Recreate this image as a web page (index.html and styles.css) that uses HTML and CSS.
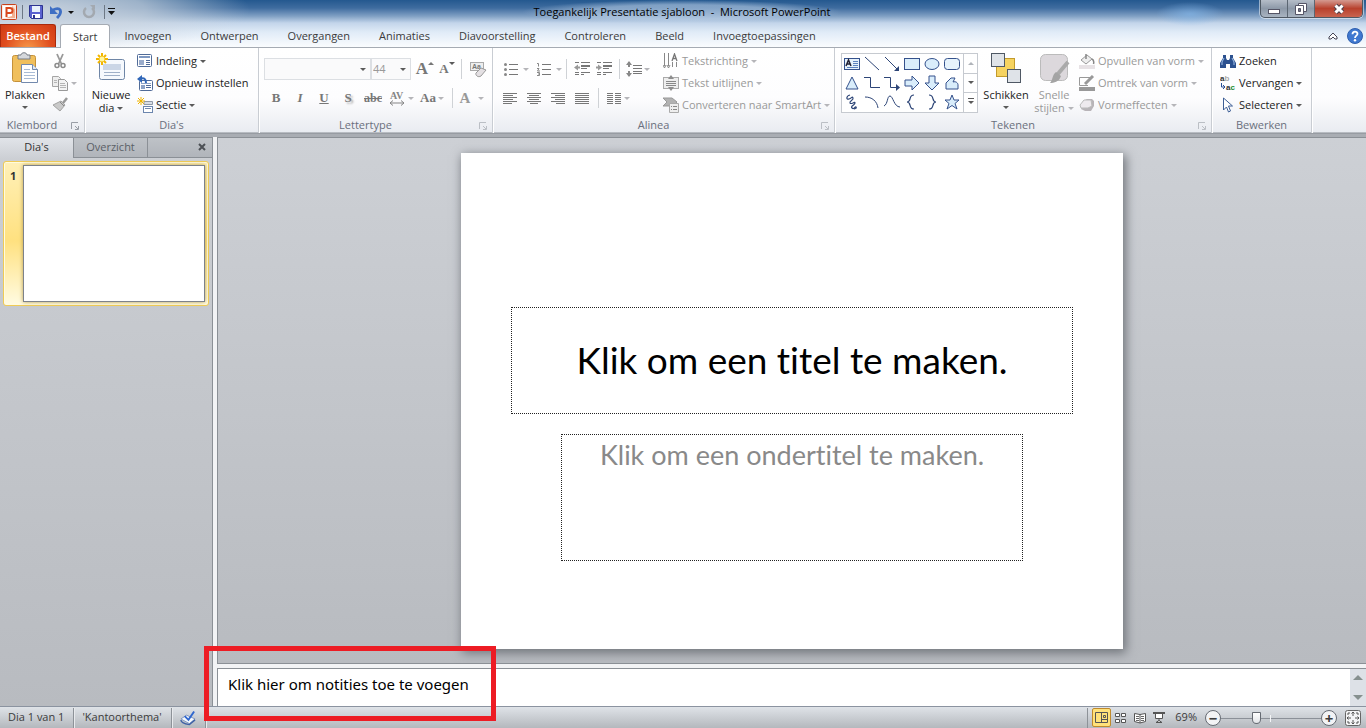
FILE: index.html
```
<!DOCTYPE html>
<html lang="nl">
<head>
  <meta charset="UTF-8" />
  <meta name="viewport" content="width=device-width, initial-scale=1.0"/>
  <title>Toegankelijk Presentatie sjabloon - Microsoft PowerPoint</title>
  <link rel="stylesheet" href="styles.css">
</head>
<body>
  <header class="header">
    <div class="titlebar">
      <div class="quick">
        <svg class="app-logo" width="16" height="16" viewBox="0 0 16 16"><rect x=".5" y=".5" width="15" height="15" rx="1" fill="#fbe9e2" stroke="#c8421c"/><path d="M2 2h9l3 3v9H2z" fill="#fff"/><path d="M11 2l3 3v9H4l7-2z" fill="#f3b08f"/><path d="M5.500 13V4H9a2.500 2.500 0 0 1 0 5H5.500" fill="none" stroke="#d9481d" stroke-width="2"/></svg>
        <span class="quick-line"></span>
        <button class="quick-btn" aria-label="Opslaan"><svg width="16" height="16" viewBox="0 0 16 16"><path d="M1.500 1.500h13v13h-11l-2-2z" fill="#5a62d0" stroke="#2c3490"/><path d="M4 2h8v6H4z" fill="#e8f1fb"/><path d="M4 10h8v4H4z" fill="#fff"/><path d="M5 11h2v3H5z" fill="#2c3490"/></svg></button>
        <button class="quick-btn" aria-label="Ongedaan maken"><svg width="14" height="14" viewBox="0 0 14 14"><path d="M4 5c5-3 9-1 7 4-.6 1.600-1.600 2.500-3 4" fill="none" stroke="#3f6fc4" stroke-width="2.800"/><path d="M1 1v8h8z" fill="#3f6fc4"/></svg></button>
        <i class="caret black"></i>
        <button class="quick-btn redo" aria-label="Opnieuw"><svg width="14" height="14" viewBox="0 0 14 14"><path d="M4 3a5 5 0 1 0 6 0" fill="none" stroke="#a3a9b0" stroke-width="2.500"/><path d="M8 0h5v5z" fill="#a3a9b0"/></svg></button>
        <span class="quick-line"></span>
        <button class="quick-btn more" aria-label="Werkbalk aanpassen"><svg width="7" height="8" viewBox="0 0 7 8"><path d="M0 0h7v1H0zM0 3h7L3.500 7z" fill="#111"/></svg></button>
      </div>
      <div class="window-title">Toegankelijk Presentatie sjabloon &nbsp;-&nbsp; Microsoft PowerPoint</div>
      <div class="window-controls">
        <div class="controls-box">
          <button aria-label="Minimaliseren"><svg width="14" height="14" viewBox="0 0 14 14"><rect x="1.500" y="7.500" width="11" height="4" fill="#fff" stroke="#556"/></svg></button>
          <button aria-label="Verkleinen"><svg width="14" height="14" viewBox="0 0 14 14"><path d="M4.500 1.500h8v8h-8z" fill="#fff" stroke="#556"/><path d="M1.500 3.500h8v9h-8z" fill="#fff" stroke="#556"/><path d="M4.500 6.500h2v3h-2z" fill="#778" stroke="#556"/></svg></button>
          <button class="close" aria-label="Sluiten"><svg width="14" height="14" viewBox="0 0 14 14"><path d="M3.500 3.500l7 7M10.500 3.500l-7 7" stroke="#50404a" stroke-width="5"/><path d="M3.500 3.500l7 7M10.500 3.500l-7 7" stroke="#fff" stroke-width="3"/></svg></button>
        </div>
      </div>
    </div>
    <nav class="tabs">
      <button class="file-tab">Bestand</button>
      <button class="tab active">Start</button>
      <button class="tab">Invoegen</button>
      <button class="tab">Ontwerpen</button>
      <button class="tab">Overgangen</button>
      <button class="tab">Animaties</button>
      <button class="tab">Diavoorstelling</button>
      <button class="tab">Controleren</button>
      <button class="tab">Beeld</button>
      <button class="tab">Invoegtoepassingen</button>
      <div class="tabs-right">
        <button aria-label="Lint minimaliseren"><svg width="10" height="8" viewBox="0 0 10 8"><path d="M1 5l4-4 4 4v2H7L5 5 3 7H1z" fill="#fff" stroke="#445"/></svg></button>
        <button aria-label="Help"><svg width="16" height="16" viewBox="0 0 16 16"><circle cx="8" cy="8" r="7.500" fill="#3f78d0" stroke="#2f5fae"/><path d="M5.500 6.200C5.500 2.800 10.600 2.900 10.500 6 10.400 7.600 8 7.800 8 10" fill="none" stroke="#fff" stroke-width="1.800"/><circle cx="8" cy="12.300" r="1.200" fill="#fff"/></svg></button>
      </div>
    </nav>
  </header>

  <section class="ribbon">
    <!-- Klembord -->
    <div class="group clipboard">
      <div class="group-body">
        <button class="big">
          <svg width="30" height="32" viewBox="0 0 30 32"><rect x="2.500" y="3.500" width="23" height="26" rx="2" fill="#f0bf5c" stroke="#c5913a"/><path d="M8 7V3h3c0-3 6-3 6 0h3v4z" fill="#d5d8dc" stroke="#777d85"/><path d="M11.500 12.500h11l5 5v13h-16z" fill="#fff" stroke="#7289ad"/><path d="M22.500 12.500v5h5" fill="#dfe8f4" stroke="#7289ad"/><path d="M14 17.500h6M14 20.500h11M14 23.500h11M14 26.500h11" stroke="#a9bcd6"/></svg>
          <span>Plakken</span>
          <i class="caret"></i>
        </button>
        <div class="rows">
          <button class="small" aria-label="Knippen"><svg width="16" height="16" viewBox="0 0 16 16"><path d="M5 1l4.500 10M11 1L6.500 11" stroke="#999" stroke-width="1.800"/><circle cx="5" cy="12.500" r="2" fill="none" stroke="#8b8b8b" stroke-width="1.500"/><circle cx="11" cy="12.500" r="2" fill="none" stroke="#8b8b8b" stroke-width="1.500"/></svg></button>
          <button class="small" aria-label="Kopiëren"><svg width="16" height="16" viewBox="0 0 16 16"><path d="M.5 1.500h6l2 2v8h-8z" fill="#eee" stroke="#a5a5a5"/><path d="M6.500 4.500h6l3 3v8h-9z" fill="#f4f4f4" stroke="#999"/><path d="M2 5.500h3M2 7.500h3M8 8.500h5M8 10.500h6M8 12.500h6" stroke="#b5b5b5"/></svg><i class="caret dim"></i></button>
          <button class="small" aria-label="Opmaak kopiëren"><svg width="16" height="16" viewBox="0 0 16 16"><path d="M15 1l-4 5" stroke="#999" stroke-width="2.500"/><path d="M9 4l4 4-5 6-7-6z" fill="#c9c9c9" stroke="#a2a2a2"/><path d="M8 5l4 4" stroke="#888"/></svg></button>
        </div>
      </div>
      <div class="group-label">Klembord<svg class="launch" width="8" height="8" viewBox="0 0 8 8"><path d="M.5 7V.5H7M4 4l3 3M7.500 4v3.500H4" fill="none" stroke="#999ea6"/></svg></div>
    </div>

    <!-- Dia's -->
    <div class="group slides">
      <div class="group-body">
        <button class="big">
          <svg width="32" height="32" viewBox="0 0 32 32"><rect x="4.500" y="7.500" width="25" height="20" rx="2" fill="#f6f9fd" stroke="#6f86a6"/><path d="M8 12h18v6H8z" fill="#cbd6e6"/><path d="M9 20.500h16M9 23.500h16" stroke="#9fb0c8"/><path d="M7 1v12M1 7h12M3 3l8 8M11 3l-8 8" stroke="#f2b600" stroke-width="2"/><circle cx="7" cy="7" r="2.500" fill="#fff6a0"/></svg>
          <span>Nieuwe<br>dia <i class="caret"></i></span>
        </button>
        <div class="rows">
          <button class="small"><svg width="16" height="16" viewBox="0 0 16 16"><rect x=".5" y="1.500" width="14" height="12" rx="1" fill="#fff" stroke="#506b98"/><path d="M2 3h11v2H2z" fill="#7f99c2"/><path d="M2 7h5v5H2z" fill="#9aaccb"/><path d="M9 7.500h4M9 9.500h4M9 11.500h4" stroke="#506b98"/></svg>Indeling<i class="caret"></i></button>
          <button class="small"><svg width="16" height="16" viewBox="0 0 16 16"><rect x="2.500" y="5.500" width="13" height="10" rx="1" fill="#fff" stroke="#506b98"/><path d="M4 8h10v1H4zM4 10h4v4H4z" fill="#8da3c7"/><path d="M9 10.500h5M9 12.500h5" stroke="#506b98"/><path d="M3 4c4-2 6 0 6 4" fill="none" stroke="#2f66b8" stroke-width="2"/><path d="M0 4l5-4v8z" fill="#2f66b8"/></svg>Opnieuw instellen</button>
          <button class="small"><svg width="16" height="16" viewBox="0 0 16 16"><path d="M7 4.500h8.500v3H7z" fill="#d8dde5" stroke="#8f98a6"/><rect x="6.500" y="9.500" width="9" height="6" fill="#fff" stroke="#6c86ae"/><path d="M8 11.500h6" stroke="#7288ad"/><path d="M4 0v8M0 4h8M1 1l6 6M7 1L1 7" stroke="#f0b400"/></svg>Sectie<i class="caret"></i></button>
        </div>
      </div>
      <div class="group-label">Dia's</div>
    </div>

    <!-- Lettertype -->
    <div class="group font">
      <div class="group-body tools">
        <div class="tool-row">
          <div class="select-wrap name"><select aria-label="Lettertype"><option></option></select><i class="caret"></i></div>
          <div class="select-wrap size"><select aria-label="Tekengrootte"><option>44</option></select><i class="caret"></i></div>
          <button class="tool serif grow" aria-label="Groter">A<i class="caret up"></i></button>
          <button class="tool serif shrink" aria-label="Kleiner">A<i class="caret"></i></button>
          <span class="line"></span>
          <button class="tool clear" aria-label="Opmaak wissen"><svg width="17" height="17" viewBox="0 0 17 17"><rect x=".5" y="1.500" width="13" height="8" fill="#eee" stroke="#aaa"/><text class="icon-text" x="2" y="8">Aa</text><path d="M6 12l5-5 5 2-5 6c-3 2-6-1-5-3z" fill="#e4e0e3" stroke="#999"/></svg></button>
        </div>
        <div class="tool-row">
          <button class="tool serif">B</button>
          <button class="tool serif italic">I</button>
          <button class="tool serif underline">U</button>
          <button class="tool serif shadow">S</button>
          <button class="tool serif strike">abc</button>
          <button class="tool wide" aria-label="Tekenafstand"><svg width="17" height="15" viewBox="0 0 17 15"><text x="1" y="8" font-family="Liberation Serif" font-size="10" font-weight="700" fill="#858585">AV</text><path d="M1 12h14M4 9.500L1 12l3 2.500M12 9.500l3 2.500-3 2.500" fill="none" stroke="#858585"/></svg><i class="caret dim"></i></button>
          <button class="tool serif wide case">Aa<i class="caret dim"></i></button>
          <span class="line"></span>
          <button class="tool serif wide color">A<i class="caret dim"></i></button>
        </div>
      </div>
      <div class="group-label">Lettertype<svg class="launch" width="8" height="8" viewBox="0 0 8 8"><path d="M.5 7V.5H7M4 4l3 3M7.500 4v3.500H4" fill="none" stroke="#bbbfc5"/></svg></div>
    </div>

    <!-- Alinea -->
    <div class="group paragraph">
      <div class="group-body">
        <div class="tools">
          <div class="tool-row">
            <button class="tool list" aria-label="Opsommingstekens"><svg width="14" height="14" viewBox="0 0 14 14"><path d="M5 2.500h9M5 7.500h9M5 12.500h9" stroke="#777"/><circle cx="1.500" cy="2.500" r="1.500" fill="#888"/><circle cx="1.500" cy="7.500" r="1.500" fill="#888"/><circle cx="1.500" cy="12.500" r="1.500" fill="#888"/></svg><i class="caret dim"></i></button>
            <button class="tool list" aria-label="Nummering"><svg width="14" height="14" viewBox="0 0 14 14"><path d="M5 2.500h9M5 7.500h9M5 12.500h9" stroke="#777"/><path d="M0 1.500h1.500v3M0 6.500h2L.5 9H3M0 10.500h2.500v3H0M1 12h1" fill="none" stroke="#888"/></svg><i class="caret dim"></i></button>
            <span class="line"></span>
            <button class="tool mid" aria-label="Inspringing verkleinen"><svg width="16" height="14" viewBox="0 0 16 14"><path d="M1 .5h4M7 .5h9M7 3.500h9M7 4.500h9M7 6.500h6M1 10.500h4M7 10.500h9M1 12.500h4M7 12.500h3" stroke="#777"/><path d="M0 5.500l4-3v2h2v2H4v2z" fill="#999"/></svg></button>
            <button class="tool mid" aria-label="Inspringing vergroten"><svg width="16" height="14" viewBox="0 0 16 14"><path d="M1 .5h4M7 .5h9M7 3.500h9M7 4.500h9M7 6.500h6M1 10.500h4M7 10.500h9M1 12.500h4M7 12.500h3" stroke="#777"/><path d="M6 5.500l-4-3v2H0v2h2v2z" fill="#999"/></svg></button>
            <span class="line"></span>
            <button class="tool spacing" aria-label="Regelafstand"><svg width="16" height="16" viewBox="0 0 16 16"><path d="M7 4.500h9M7 7.500h9M7 10.500h9M7 12.500h9" stroke="#777"/><path d="M3 1v5M3 10v5" stroke="#888" stroke-width="2"/><path d="M0 4l3-4 3 4zM0 12l3 4 3-4z" fill="#888"/></svg><i class="caret dim"></i></button>
          </div>
          <div class="tool-row align">
            <button class="tool" aria-label="Links uitlijnen"><svg width="14" height="11" viewBox="0 0 14 11"><path d="M0 .5h14M0 2.500h10M0 4.500h14M0 6.500h10M0 8.500h14M0 10.500h9" stroke="#777"/></svg></button>
            <button class="tool" aria-label="Centreren"><svg width="14" height="11" viewBox="0 0 14 11"><path d="M0 .5h14M2 2.500h10M0 4.500h14M2 6.500h10M0 8.500h14M3 10.500h8" stroke="#777"/></svg></button>
            <button class="tool" aria-label="Rechts uitlijnen"><svg width="14" height="11" viewBox="0 0 14 11"><path d="M0 .5h14M4 2.500h10M0 4.500h14M4 6.500h10M0 8.500h14M5 10.500h9" stroke="#777"/></svg></button>
            <button class="tool" aria-label="Uitvullen"><svg width="14" height="11" viewBox="0 0 14 11"><path d="M0 .5h14M0 2.500h14M0 4.500h14M0 6.500h14M0 8.500h14M0 10.500h14" stroke="#777"/></svg></button>
            <span class="line"></span>
            <button class="tool columns" aria-label="Kolommen"><svg width="14" height="11" viewBox="0 0 14 11"><path d="M0 .5h6M8 .5h6M0 2.500h6M8 2.500h6M0 4.500h6M8 4.500h6M0 6.500h6M8 6.500h6M0 8.500h6M8 8.500h6M0 10.500h6M8 10.500h6" stroke="#777"/></svg><i class="caret dim"></i></button>
          </div>
        </div>
        <div class="rows off">
          <button class="small"><svg width="16" height="16" viewBox="0 0 16 16"><path d="M1.500 0v13M5.500 0v13M9.500 9v5M13.500 9v5M0 12l1.500 3L3 12M4 12l1.500 3L7 12" fill="none" stroke="#888"/><path d="M9 8l2.500-7L14 8M10 5.500h3" fill="none" stroke="#777" stroke-width="1.300"/></svg>Tekstrichting<i class="caret dim"></i></button>
          <button class="small"><svg width="16" height="16" viewBox="0 0 16 16"><rect x=".5" y="2.500" width="15" height="11" fill="#eee" stroke="#aaa"/><path d="M3 6.500h10M3 8.500h10M3 10.500h10" stroke="#888"/><path d="M5 4l3-4 3 4zM5 12l3 4 3-4z" fill="#8d8d8d"/></svg>Tekst uitlijnen<i class="caret dim"></i></button>
          <button class="small"><svg width="16" height="16" viewBox="0 0 16 16"><path d="M0 1h9l5 4-4 4H0l4-4z" fill="#b2b2b2" stroke="#999"/><path d="M6.500 6.500h9v9h-9z" fill="#eee" stroke="#aaa"/><path d="M8 9.500h1M10 9.500h4M8 12.500h1M10 12.500h4" stroke="#888"/></svg>Converteren naar SmartArt<i class="caret dim"></i></button>
        </div>
      </div>
      <div class="group-label">Alinea<svg class="launch" width="8" height="8" viewBox="0 0 8 8"><path d="M.5 7V.5H7M4 4l3 3M7.500 4v3.500H4" fill="none" stroke="#bbbfc5"/></svg></div>
    </div>

    <!-- Tekenen -->
    <div class="group drawing">
      <div class="group-body">
        <div class="gallery">
          <div class="shapes">
            <button aria-label="Tekstvak"><svg width="16" height="16" viewBox="0 0 16 16"><rect x=".5" y="2.500" width="15" height="11" fill="#e6f2fc" stroke="#34518c"/><path d="M2 10l2.500-6L7 10M3 8h3" fill="none" stroke="#223" stroke-width="1.500"/><path d="M9 5.500h5M9 7.500h5M9 9.500h5M3 11.500h11" stroke="#5c83bf"/></svg></button>
            <button aria-label="Lijn"><svg width="16" height="16" viewBox="0 0 16 16"><path d="M1 1l14 13" stroke="#2d4577"/></svg></button>
            <button aria-label="Pijl"><svg width="16" height="16" viewBox="0 0 16 16"><path d="M1 1l12 12" stroke="#2d4577"/><path d="M15 15v-5l-5 5z" fill="#2d4577"/></svg></button>
            <button aria-label="Rechthoek"><svg width="16" height="16" viewBox="0 0 16 16"><rect x=".5" y="2.500" width="15" height="11" fill="#d9edfb" stroke="#34518c"/></svg></button>
            <button aria-label="Ovaal"><svg width="16" height="16" viewBox="0 0 16 16"><ellipse cx="8" cy="8" rx="7" ry="5.500" fill="#d9edfb" stroke="#34518c"/></svg></button>
            <button aria-label="Afgeronde rechthoek"><svg width="16" height="16" viewBox="0 0 16 16"><rect x=".5" y="2.500" width="15" height="11" rx="3" fill="#e6f3fc" stroke="#34518c"/></svg></button>
            <button aria-label="Driehoek"><svg width="16" height="16" viewBox="0 0 16 16"><path d="M8 2l6 12H2z" fill="#d9edfb" stroke="#34518c"/></svg></button>
            <button aria-label="Verbindingslijn"><svg width="16" height="16" viewBox="0 0 16 16"><path d="M0 2.500h6.500v10H16" fill="none" stroke="#2d4577"/></svg></button>
            <button aria-label="Verbindingspijl"><svg width="16" height="16" viewBox="0 0 16 16"><path d="M0 2.500h6.500v10H14" fill="none" stroke="#2d4577"/><path d="M12 9l4 3.500-4 3.500z" fill="#2d4577"/></svg></button>
            <button aria-label="Pijl rechts"><svg width="16" height="16" viewBox="0 0 16 16"><path d="M1 5h7V1l7 7-7 7v-4H1z" fill="#d9edfb" stroke="#34518c"/></svg></button>
            <button aria-label="Pijl omlaag"><svg width="16" height="16" viewBox="0 0 16 16"><path d="M5 1v7H1l7 7 7-7h-4V1z" fill="#d9edfb" stroke="#34518c"/></svg></button>
            <button aria-label="Vrije vorm"><svg width="16" height="16" viewBox="0 0 16 16"><path d="M2 14V8l5-5h4L9 7c3-1 5 1 5 3v4z" fill="#d9edfb" stroke="#34518c"/></svg></button>
            <button aria-label="Krabbel"><svg width="16" height="16" viewBox="0 0 16 16"><path d="M6 1C2 2 2 6 5 5s3-3 4-1-4 3-3 5 5-2 5 0-5 3-3 5 3-2 4-1-1 2-2 2" fill="none" stroke="#2d4577" stroke-width="1.200"/></svg></button>
            <button aria-label="Boog"><svg width="16" height="16" viewBox="0 0 16 16"><path d="M1 3c7 0 12 4 13 11" fill="none" stroke="#2d4577"/></svg></button>
            <button aria-label="Kromme"><svg width="16" height="16" viewBox="0 0 16 16"><path d="M0 12C4 10 3 2 6 2s4 11 10 11" fill="none" stroke="#2d4577"/></svg></button>
            <button aria-label="Accolade links"><svg width="16" height="16" viewBox="0 0 16 16"><path d="M10 1C4 1 8 8 3 8c5 0 1 7 7 7" fill="none" stroke="#2d4577" stroke-width="1.200"/></svg></button>
            <button aria-label="Accolade rechts"><svg width="16" height="16" viewBox="0 0 16 16"><path d="M5 1c6 0 2 7 7 7-5 0-1 7-7 7" fill="none" stroke="#2d4577" stroke-width="1.200"/></svg></button>
            <button aria-label="Ster"><svg width="16" height="16" viewBox="0 0 16 16"><path d="M8 1l2 5h5l-4 3.500 2 5.500-5-3.500L3 15l2-5.500L1 6h5z" fill="#d9edfb" stroke="#34518c"/></svg></button>
          </div>
          <div class="gallery-scroll">
            <button aria-label="Omhoog"><i class="caret up"></i></button>
            <button aria-label="Omlaag"><i class="caret"></i></button>
            <button aria-label="Meer vormen"><i class="caret over"></i></button>
          </div>
        </div>
        <button class="big">
          <svg width="32" height="32" viewBox="0 0 32 32"><rect x="6.500" y="6.500" width="18" height="18" fill="#f6d360" stroke="#c39b2c"/><rect x="1.500" y="1.500" width="13" height="13" fill="#dfe3e8" stroke="#4f5864"/><rect x="17.500" y="17.500" width="13" height="13" fill="#dfe3e8" stroke="#4f5864"/></svg>
          <span>Schikken</span>
          <i class="caret"></i>
        </button>
        <button class="big off">
          <svg width="32" height="32" viewBox="0 0 32 32"><rect x="2.500" y="2.500" width="27" height="26" rx="5" fill="#dcd8dc" stroke="#bbb"/><path d="M30 10L19 23" stroke="#aaa" stroke-width="4"/><path d="M18 20l5 4c-2 6-7 7-11 7 3-3 2-8 6-11z" fill="#a4a4a4"/></svg>
          <span>Snelle<br>stijlen <i class="caret dim"></i></span>
        </button>
        <div class="rows off">
          <button class="small"><svg width="16" height="16" viewBox="0 0 16 16"><path d="M2 7l6-5 5 4-6 5z" fill="#eee" stroke="#999"/><path d="M7 1v5M13 6c2 1 2 3 1.500 5" fill="none" stroke="#888" stroke-width="1.500"/><path d="M0 12h16v4H0z" fill="#e7e2e5"/></svg>Opvullen van vorm<i class="caret dim"></i></button>
          <button class="small"><svg width="16" height="16" viewBox="0 0 16 16"><path d="M12 2.500H.5v8H9" fill="#fff" stroke="#999"/><path d="M14 1L6 9" stroke="#999" stroke-width="3"/><path d="M0 12h16v4H0z" fill="#999"/></svg>Omtrek van vorm<i class="caret dim"></i></button>
          <button class="small"><svg width="16" height="16" viewBox="0 0 16 16"><path d="M4 4l4-2h5l2 2v5l-3 5H6l-4-2z" fill="#b8b4b8"/><path d="M5 3h7l1 6-4 2H2L1 8z" fill="#eeeaee" stroke="#bbb"/></svg>Vormeffecten<i class="caret dim"></i></button>
        </div>
      </div>
      <div class="group-label">Tekenen<svg class="launch" width="8" height="8" viewBox="0 0 8 8"><path d="M.5 7V.5H7M4 4l3 3M7.500 4v3.500H4" fill="none" stroke="#bbbfc5"/></svg></div>
    </div>

    <!-- Bewerken -->
    <div class="group editing">
      <div class="group-body">
        <div class="rows">
          <button class="small"><svg width="16" height="16" viewBox="0 0 16 16"><path d="M3 2h3v3l1 2h2l1-2V2h3v3l3 5v5h-6v-4H6v4H0v-5l3-5z" fill="#2c518f"/><path d="M4 5L2 9v3M12 5l2 4v3" fill="none" stroke="#9fc0ea"/></svg>Zoeken</button>
          <button class="small"><svg width="16" height="20" viewBox="0 0 16 20"><text class="icon-text" x="0" y="8">a<tspan class="pale">b</tspan></text><text class="icon-text" x="6" y="17">a<tspan class="green">c</tspan></text><path d="M1.500 10v4H5M3 12l2 2-2 2" fill="none" stroke="#2b4f96"/></svg>Vervangen<i class="caret"></i></button>
          <button class="small"><svg width="16" height="16" viewBox="0 0 16 16"><path d="M3.500 1v12l3-3 2 5 2-1-2-5h4z" fill="#fff" stroke="#3e5f96"/></svg>Selecteren<i class="caret"></i></button>
        </div>
      </div>
      <div class="group-label">Bewerken</div>
    </div>
  </section>

  <main class="workspace">
    <aside class="outline">
      <div class="outline-tabs">
        <button class="active">Dia's</button>
        <button>Overzicht</button>
        <button class="outline-close" aria-label="Deelvenster sluiten"><svg width="8" height="8" viewBox="0 0 8 8"><path d="M1 1l6 6M7 1L1 7" stroke="#4c5055" stroke-width="2"/></svg></button>
      </div>
      <div class="thumb">
        <span class="thumb-number">1</span>
        <div class="thumb-slide"></div>
      </div>
    </aside>
    <div class="editor">
      <div class="canvas">
        <div class="slide">
          <div class="placeholder title">Klik om een titel te maken.</div>
          <div class="placeholder subtitle">Klik om een ondertitel te maken.</div>
        </div>
      </div>
      <div class="notes">
        <p>Klik hier om notities toe te voegen</p>
        <div class="notes-scroll"><i class="caret up"></i><i class="caret"></i></div>
        <div class="highlight"></div>
      </div>
    </div>
  </main>

  <footer class="status">
    <span class="status-item">Dia 1 van 1</span>
    <span class="status-item">'Kantoorthema'</span>
    <button class="status-item" aria-label="Spelling"><svg width="16" height="16" viewBox="0 0 17 16"><path d="M1 9l6-4 9 4-6 5z" fill="#f4f8fd" stroke="#7b93bf"/><path d="M1 10c0 3 3 4 9 5l6-5" fill="none" stroke="#3f61a6" stroke-width="1.500"/><path d="M5 6l4 4 6-9" fill="none" stroke="#2f67cf" stroke-width="2"/></svg></button>
    <div class="status-right">
      <button class="view active" aria-label="Normaal"><svg width="13" height="11" viewBox="0 0 13 11"><path d="M.5.500h12v10H.5zM6.500.500v10M6.500 7.500h6M8.500 3.500h2v2h-2z" fill="none" stroke="#555"/></svg></button>
      <button class="view" aria-label="Diasorteerder"><svg width="11" height="11" viewBox="0 0 11 11"><path d="M.5 1.500h4v3h-4zM6.500 1.500h4v3h-4zM.5 7.500h4v3h-4zM6.500 7.500h4v3h-4z" fill="#fff" stroke="#555"/></svg></button>
      <button class="view" aria-label="Leesweergave"><svg width="12" height="12" viewBox="0 0 12 12"><path d="M.5 1.500L6 2.500l5.500-1v8L6 11 .5 9.500zM6 2.500V11" fill="#fff" stroke="#555"/><path d="M2 4.500h3M2 6.500h3M2 8.500h3M7 4.500h3M7 6.500h3M7 8.500h3" stroke="#666"/></svg></button>
      <button class="view" aria-label="Diavoorstelling"><svg width="12" height="11" viewBox="0 0 12 11"><path d="M0 1h12" stroke="#555" stroke-width="2"/><path d="M2.500 2v4.500h7V2M6 6.500V9M3 10.500l3-2 3 2z" fill="#fff" stroke="#555"/></svg></button>
      <span class="percent">69%</span>
      <button class="round" aria-label="Uitzoomen">−</button>
      <input class="zoom" type="range" min="10" max="190" value="72" aria-label="Zoom">
      <button class="round" aria-label="Inzoomen">+</button>
      <button class="fit" aria-label="Aanpassen aan venster"><svg width="16" height="16" viewBox="0 0 16 16"><rect x=".5" y=".5" width="15" height="15" rx="2" fill="#f4f4f5" stroke="#666"/><path d="M8 2v4M6.500 3.500L8 2l1.500 1.500M8 10v4M6.500 12.500L8 14l1.500-1.500M2 8h4M3.500 6.500L2 8l1.500 1.500M10 8h4M12.500 6.500L14 8l-1.500 1.500M3 5V3h2M11 3h2v2M3 11v2h2M13 11v2h-2" fill="none" stroke="#555"/></svg></button>
    </div>
  </footer>
</body>
</html>
```
FILE: styles.css
```
* {
  box-sizing: border-box;
}
html, body {
  margin: 0;
  height: 100%;
  overflow: hidden;
}
body {
  display: flex;
  flex-direction: column;
  font-family: "Open Sans", "Noto Sans", sans-serif;
  font-size: 11px;
  line-height: 14px;
  color: #3b3b3b;
  background: #b9bdc2;
}
button, select {
  font: inherit;
  color: inherit;
  background: none;
  border: none;
  padding: 0;
  margin: 0;
}
button {
  display: flex;
  align-items: center;
  justify-content: center;
  white-space: nowrap;
}
svg {
  display: block;
  flex: none;
}
.icon-text {
  font: bold 8px/8px "Liberation Sans", sans-serif;
  fill: #333;
}
.clear .icon-text { fill: #777; font-size: 7px; }
.icon-text .pale { fill: #aaa; }
.icon-text .green { fill: #198b2c; }
.caret {
  display: inline-block;
  flex: none;
  border: 3px solid transparent;
  border-top-color: #5a5a5a;
  border-bottom: none;
  vertical-align: 2px;
}
.caret.dim {
  border-top-color: #b5b5b9;
}
.caret.black {
  border-top-color: #111;
}
.caret.up {
  border-top: none;
  border-bottom: 3px solid #b0b4ba;
}

/* title bar and tabs */
.header {
  flex: none;
  border-bottom: 1px solid #a5abb3;
  background:
    radial-gradient(ellipse 210px 44px at 40px 10px, rgba(205, 214, 224, 0.95), rgba(205, 214, 224, 0.7) 50%, transparent),
    radial-gradient(ellipse 34px 12px at 1190px 14px, rgba(130, 180, 230, 0.7), transparent),
    linear-gradient(#24588f 0, #3f6c9f 8px, #7f9fc3 16px, #c3d5ea 23px, #e0ebf7 32px, #fafcfe 47px);
}
.titlebar {
  display: flex;
  height: 24px;
}
.quick {
  flex: 1;
  display: flex;
  align-items: center;
  gap: 5px;
  padding-left: 1px;
}
.quick-line {
  width: 1px;
  height: 14px;
  background: #6d7885;
}
.quick-btn.redo {
  margin: 0 3px;
}
.quick-btn.more {
  margin-left: -2px;
}
.window-title {
  padding: 0 12px;
  line-height: 24px;
  color: #000;
  background: radial-gradient(ellipse closest-side, rgba(190, 210, 232, 0.55) 60%, transparent);
}
.window-controls {
  flex: 1;
  display: flex;
  justify-content: flex-end;
  align-items: flex-start;
  padding-right: 3px;
}
.controls-box {
  display: flex;
  height: 18px;
  border: 1px solid #4e5863;
  border-top: none;
  border-radius: 0 0 5px 5px;
  background: linear-gradient(#b5bdc8, #8d99a8 50%, #a9b4c1);
  box-shadow: 0 0 0 1px rgba(255, 255, 255, 0.5);
  overflow: hidden;
}
.controls-box button {
  width: 27px;
  border-right: 1px solid #5b6672;
}
.controls-box .close {
  width: 47px;
  border: none;
  background: linear-gradient(#d49a90, #b8412d 50%, #c9644f);
}
.tabs {
  display: flex;
  height: 23px;
}
.tab {
  padding: 0 14px;
}
.tab + .tab {
  margin-left: 1px;
}
.tab.active {
  padding: 0 12px;
  margin-right: -1px;
  margin-bottom: -1px;
  border: 1px solid #a5abb3;
  border-bottom: none;
  border-radius: 3px 3px 0 0;
  background: #fff;
}
.file-tab {
  width: 56px;
  margin-right: 4px;
  border: 1px solid #a92a0c;
  border-bottom: none;
  border-radius: 0 3px 0 0;
  background: radial-gradient(ellipse at 50% 110%, #f79a4a, #e04e1f 60%, #cf3a14);
  color: #fff;
  font-weight: 600;
}
.tabs-right {
  margin-left: auto;
  display: flex;
  align-items: center;
  gap: 9px;
  padding-right: 3px;
}

/* ribbon */
.ribbon {
  flex: none;
  display: flex;
  height: 89px;
  padding-bottom: 3px;
  background: linear-gradient(#fff 0, #fdfdfe 50px, #e9ecf1 84px, #868b92 85px, #a9adb3 86px);
  white-space: nowrap;
}
.group {
  display: flex;
  flex-direction: column;
  flex: none;
  margin-bottom: 1px;
  border-right: 1px solid #c9cdd3;
  box-shadow: 1px 0 #fff;
}
.group-body {
  flex: 1;
  display: flex;
  padding-top: 2px;
}
.group-label {
  display: flex;
  justify-content: center;
  align-items: center;
  height: 16px;
  padding-bottom: 1px;
  position: relative;
  color: #6a6f7d;
}
.launch {
  position: absolute;
  right: 5px;
  bottom: 3px;
}
.clipboard { width: 85px; }
.clipboard .group-label { padding-right: 20px; }
.slides { width: 174px; }
.font { width: 234px; }
.font .group-label, .paragraph .group-label, .drawing .group-label { padding-right: 20px; }
.paragraph { width: 342px; }
.drawing { width: 377px; }
.editing { width: 100px; }
.big {
  flex-direction: column;
  justify-content: flex-start;
  width: 50px;
  padding-top: 2px;
  color: #222;
  line-height: 13px;
}
.big svg {
  margin-bottom: 4px;
}
.big > .caret {
  margin-top: 5px;
}
.slides .big {
  margin-left: 1px;
  margin-right: 1px;
}
.rows {
  display: grid;
  grid-template-rows: repeat(3, 22px);
}
.small {
  justify-content: flex-start;
  gap: 3px;
  color: #222;
}
.clipboard .rows {
  padding-left: 2px;
}
.off, .off .small {
  color: #999;
}
.tools {
  display: flex;
  flex-direction: column;
  gap: 5px;
}
.tool-row {
  display: flex;
  align-items: center;
  height: 24px;
  color: #777;
}
.font .tools {
  padding: 9px 0 0 5px;
}
.paragraph .tools {
  width: 170px;
  padding-top: 7px;
}
.select-wrap {
  display: flex;
  align-items: center;
  height: 22px;
  padding-right: 4px;
  border: 1px solid #dcdfe3;
  background: #fafafb;
}
.select-wrap select {
  flex: 1;
  appearance: none;
  color: #999;
  padding-left: 1px;
}
.name { width: 107px; }
.size { width: 40px; }
.tool {
  width: 24px;
  height: 22px;
}
.serif {
  font-family: "Liberation Serif", serif;
  font-size: 13px;
  font-weight: bold;
}
.grow { font-size: 17px; margin-left: 2px; }
.grow .caret, .shrink .caret {
  align-self: flex-start;
  margin-top: 4px;
}
.grow .caret { border-bottom-color: #777; }
.shrink { width: 20px; }
.italic { font-style: italic; }
.underline { text-decoration: underline; }
.shadow { text-shadow: 2px 2px 2px #aaa; }
.strike { font-size: 12px; text-decoration: line-through; width: 26px; }
.wide { width: 30px; gap: 2px; }
.case { width: 32px; }
.color { font-size: 15px; gap: 8px; color: #999; }
.line {
  width: 1px;
  height: 20px;
  margin: 0 4px;
  background: #cfd2d6;
}
.list { width: 33px; gap: 5px; }
.paragraph .list:first-child { margin-left: 7px; }
.paragraph .list + .line { margin-left: 0; }
.mid { width: 22px; }
.spacing { width: 28px; gap: 2px; }
.align { padding-left: 5px; }
.columns { width: 30px; gap: 3px; }

/* shape gallery */
.gallery {
  display: flex;
  width: 137px;
  height: 60px;
  margin: 3px 3px 0 6px;
  border: 1px solid #c6cad0;
  background: #fff;
}
.shapes {
  flex: 1;
  display: grid;
  grid-template-columns: repeat(6, 20px);
  grid-auto-rows: 19px;
}
.gallery-scroll {
  display: grid;
  width: 14px;
  border-left: 1px solid #c6cad0;
}
.gallery-scroll button + button {
  border-top: 1px solid #c6cad0;
}
.caret.over {
  position: relative;
}
.caret.over::before {
  content: "";
  position: absolute;
  left: -3px;
  top: -6px;
  width: 6px;
  height: 1px;
  background: #5a5a5a;
}
.drawing .big + .big {
  margin: 0 1px 0 -2px;
}
.drawing .rows {
  margin-left: -1px;
}
.editing .rows {
  padding-left: 8px;
}

/* slide list */
.workspace {
  flex: 1;
  display: flex;
  min-height: 0;
}
.outline {
  width: 213px;
  border-right: 1px solid #8b9096;
  background: linear-gradient(#cdd0d5, #b8bbc0);
}
.outline-tabs {
  display: flex;
  height: 21px;
  background: linear-gradient(#bec2c7, #b0b4ba);
  border-top: 1px solid #8b9096;
}
.outline-tabs button {
  width: 74px;
  padding-bottom: 1px;
  border: 1px solid #8b9096;
  border-width: 0 1px 1px 0;
  color: #5b6066;
}
.outline-tabs .active {
  padding-bottom: 2px;
  border-bottom: none;
  background: linear-gradient(#e1e4e9, #cdd0d5);
  color: #333;
}
.outline-tabs .outline-close {
  flex: 1;
  justify-content: flex-end;
  padding-right: 6px;
  border-right: none;
}
.thumb {
  display: flex;
  margin: 3px 3px 0;
  padding: 3px;
  height: 145px;
  border: 1px solid #f0cb55;
  border-radius: 3px;
  background: linear-gradient(#fff0b8, #ffe180 55%, #fffbe2);
  box-shadow: inset 0 0 0 1px #fffbe0;
}
.thumb-number {
  width: 16px;
  padding: 4px 0 0 3px;
  font-weight: bold;
  color: #333;
}
.thumb-slide {
  flex: 1;
  border: 1px solid #7d828a;
  background: #fff;
  box-shadow: 0 0 4px #b39b50;
}

/* slide and notes */
.editor {
  flex: 1;
  display: flex;
  flex-direction: column;
  min-width: 0;
  border-left: 4px solid #f2f3f5;
}
.canvas {
  flex: 1;
  min-height: 0;
  display: flex;
  align-items: center;
  justify-content: center;
  border: 1px solid #8b9096;
  border-right: none;
  background: linear-gradient(#cdd0d5, #b8bbc0);
}
.slide {
  height: calc(100% - 29px);
  aspect-ratio: 4 / 3;
  display: flex;
  flex-direction: column;
  align-items: center;
  padding-top: 154px;
  gap: 20px;
  background: #fff;
  box-shadow: 2px 3px 10px 1px #70747a;
  font-family: Lato, sans-serif;
  font-variant-ligatures: none;
}
.placeholder {
  display: flex;
  justify-content: center;
  border: 1px dotted #222;
}
.title {
  width: 85%;
  height: 107px;
  align-items: center;
  font-size: 37px;
  line-height: 46px;
  color: #000;
}
.subtitle {
  width: 70%;
  height: 127px;
  padding-top: 4px;
  font-size: 27px;
  line-height: 32px;
  color: #898989;
}
.notes {
  flex: none;
  position: relative;
  display: flex;
  height: 38px;
  margin-top: 4px;
  border: 1px solid #8b9096;
  border-width: 1px 0 0 1px;
  background: #fff;
  box-shadow: 0 -4px #f2f3f5;
}
.notes p {
  flex: 1;
  margin: 0;
  padding-left: 10px;
  font-family: "Noto Sans", sans-serif;
  font-size: 15px;
  line-height: 30px;
  color: #000;
}
.notes-scroll {
  display: flex;
  flex-direction: column;
  justify-content: space-between;
  align-items: center;
  width: 16px;
  padding: 6px 0;
  background: #dde1e7;
}
.notes-scroll .caret {
  border-width: 5px;
  border-top-color: #86908f;
  border-bottom-width: 0;
}
.notes-scroll .up {
  border-bottom: 5px solid #86908f;
  border-top-width: 0;
}
.highlight {
  position: absolute;
  left: -14px;
  top: -23px;
  width: 292px;
  height: 75px;
  border: 5px solid #ed1c24;
  z-index: 2;
}

/* status bar */
.status {
  flex: none;
  display: flex;
  align-items: center;
  height: 22px;
  border-top: 1px solid #8b93a0;
  background: linear-gradient(#dfe3e8, #b4b8bd);
}
.status-item {
  height: 20px;
  padding: 0 9px 0 8px;
  line-height: 18px;
  border-right: 1px solid #8d9298;
  box-shadow: 1px 0 #e8eaed;
}
.status-right {
  display: flex;
  align-items: center;
  margin-left: auto;
  height: 20px;
  padding: 0 5px 0 4px;
  border-left: 1px solid #8d9298;
}
.view {
  width: 19px;
  height: 19px;
}
.view.active {
  border: 1px solid #c08a2c;
  border-radius: 2px;
  background: #ffe27a;
}
.percent {
  padding: 0 8px 2px 7px;
}
.round {
  width: 16px;
  height: 16px;
  border: 1px solid #666b73;
  border-radius: 50%;
  background: #f2f3f5;
  font-size: 15px;
  font-weight: bold;
  line-height: 14px;
}
.zoom {
  appearance: none;
  width: 100px;
  height: 16px;
  margin: 0;
  background:
    linear-gradient(#f4f5f7, #f4f5f7) 49px 5px / 1px 7px no-repeat,
    linear-gradient(#8b9098, #8b9098) 0 8px / 100% 1px no-repeat;
}
.zoom::-webkit-slider-thumb {
  appearance: none;
  width: 9px;
  height: 12px;
  border: 1px solid #666b73;
  border-radius: 1px 1px 5px 5px;
  background: linear-gradient(#fff, #e2e4e8);
}
.fit {
  margin-left: 8px;
}
```
